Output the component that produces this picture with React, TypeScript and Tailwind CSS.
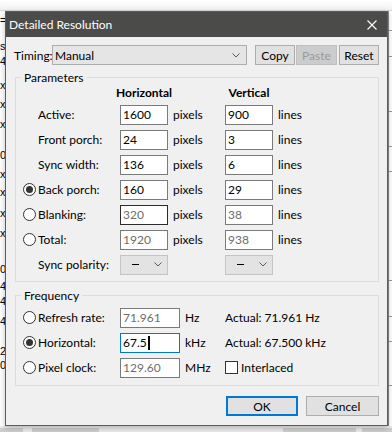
import React from "react";

const leftBits = [
  { t: "=", y: 21 },
  { t: "sl", y: 47 },
  { t: "40", y: 62 },
  { t: "x", y: 86 },
  { t: "x", y: 105 },
  { t: "x", y: 125 },
  { t: "00", y: 156 },
  { t: "x", y: 175 },
  { t: "x", y: 193 },
  { t: "x", y: 214 },
  { t: "x", y: 234 },
  { t: "02", y: 270 },
  { t: "4", y: 287 },
  { t: "4", y: 302 },
  { t: "4", y: 322 },
  { t: "28", y: 352 },
  { t: "0", y: 366 },
];

const rightLines = [32, 58, 113, 148, 173, 282, 318, 343, 387];

const Radio = ({ checked }: { checked?: boolean }) => (
  <span className="w-[13px] h-[13px] rounded-full border border-[#333] bg-white flex items-center justify-center shrink-0">
    {checked && <span className="w-[7px] h-[7px] rounded-full bg-[#333]" />}
  </span>
);

const Chevron = () => (
  <svg width="8" height="5" viewBox="0 0 8 5" className="shrink-0">
    <path d="M0.5 0.5 L4 4 L7.5 0.5" fill="none" stroke="#5a5a5a" strokeWidth="1" />
  </svg>
);

const Field = ({
  value,
  dim,
  w = "w-[48px]",
  border = "border-[#7a7a7a]",
  caret,
}: {
  value: string;
  dim?: boolean;
  w?: string;
  border?: string;
  caret?: boolean;
}) => (
  <div
    className={`${w} h-[20px] border ${border} bg-white pl-[2px] flex items-center shrink-0 ${
      dim ? "text-[#6d6d6d]" : "text-black"
    }`}
  >
    {value}
    {caret && <span className="ml-[1px] w-[2px] h-[14px] bg-black" />}
  </div>
);

const Polarity = () => (
  <div className="w-[48px] h-[20px] border border-[#c4c4c4] bg-[#e3e3e3] flex items-center justify-end pr-[5px] gap-[15px] shrink-0">
    <span className="w-[7px] h-[1px] bg-black" />
    <Chevron />
  </div>
);

type Row = {
  label: string;
  radio?: boolean;
  checked?: boolean;
  h: string;
  v: string;
  dim?: boolean;
  hBorder?: string;
};

const paramRows: Row[] = [
  { label: "Active:", h: "1600", v: "900" },
  { label: "Front porch:", h: "24", v: "3" },
  { label: "Sync width:", h: "136", v: "6" },
  { label: "Back porch:", radio: true, checked: true, h: "160", v: "29" },
  { label: "Blanking:", radio: true, h: "320", v: "38", dim: true, hBorder: "border-[#2b2b2b]" },
  { label: "Total:", radio: true, h: "1920", v: "938", dim: true },
];

const Label = ({ radio, checked, text }: { radio?: boolean; checked?: boolean; text: string }) => (
  <div className="w-[104px] pl-[7px] flex items-center gap-[2px] shrink-0">
    {radio ? <Radio checked={checked} /> : <span className="w-[13px] shrink-0" />}
    <span className="whitespace-nowrap">{text}</span>
  </div>
);

const Btn = ({
  children,
  w,
  disabled,
  primary,
}: {
  children: React.ReactNode;
  w: string;
  disabled?: boolean;
  primary?: boolean;
}) => (
  <div
    className={`${w} h-[20px] flex items-center justify-center shrink-0 ${
      primary
        ? "border-2 border-[#0078d7] bg-[#e1e1e1] text-black"
        : disabled
        ? "border border-[#bfbfbf] bg-[#cccccc] text-[#9a9a9a]"
        : "border border-[#adadad] bg-[#e1e1e1] text-black"
    }`}
  >
    {children}
  </div>
);

export default function App() {
  return (
    <div className="relative w-[392px] h-[432px] overflow-hidden bg-white font-['Lato','Noto_Sans',sans-serif] text-[12px] leading-[15px] text-black">
      {/* backdrop window, mostly hidden */}
      <div className="flex flex-col h-full">
        <div className="h-[11px] bg-gradient-to-b from-white to-[#f2f2f2] border-b border-[#d9d9d9]" />
        <div className="flex flex-1">
          <div className="w-[5px] flex flex-col font-['Liberation_Sans',sans-serif] text-[11px] leading-[12px] overflow-hidden">
            {leftBits.map((b, i) => (
              <div
                key={i}
                className="whitespace-nowrap"
                style={{ marginTop: b.y - 6 - (i === 0 ? 12 : leftBits[i - 1].y + 6) }}
              >
                {b.t}
              </div>
            ))}
          </div>
          <div className="flex-1" />
          <div className="w-[4px] flex flex-col border-l border-[#8a8a8a]">
            {rightLines.map((y, i) => (
              <div
                key={i}
                className="h-[1px] bg-[#9a9a9a] shrink-0"
                style={{ marginTop: y - 1 - (i === 0 ? 12 : rightLines[i - 1]) }}
              />
            ))}
          </div>
        </div>
        <div className="h-[6px] bg-[#ececec] flex items-end gap-0">
          <div className="w-[23px] h-[4px] bg-[#cfcfcf]" />
          <div className="w-[9px]" />
          <div className="w-[67px] h-[4px] bg-[#cfcfcf]" />
          <div className="w-[184px]" />
          <div className="w-[73px] h-[4px] bg-[#cfcfcf]" />
          <div className="w-[6px]" />
          <div className="flex-1 h-[4px] bg-[#cfcfcf]" />
        </div>
      </div>

      {/* dialog */}
      <div className="absolute left-[5px] top-[11px] w-[383px] h-[415px] border border-[#5c5c5a] bg-[#f0f0f0] flex flex-col shadow-[0_2px_6px_rgba(0,0,0,0.25)]">
        <div className="h-[25px] bg-[#4b4b49] flex items-center justify-between pl-[3px] pr-[10px] text-white shrink-0">
          <span>Detailed Resolution</span>
          <svg width="10" height="10" viewBox="0 0 10 10">
            <path d="M0.5 0.5 L9.5 9.5 M9.5 0.5 L0.5 9.5" stroke="#ffffff" strokeWidth="1.1" fill="none" />
          </svg>
        </div>

        {/* timing row */}
        <div className="mt-[8px] pl-[8px] flex items-center h-[20px]">
          <span className="w-[38px] shrink-0">Timing:</span>
          <div className="w-[195px] h-[20px] border border-[#adadad] bg-[#e5e5e5] flex items-center justify-between pl-[2px] pr-[6px]">
            <span>Manual</span>
            <Chevron />
          </div>
          <div className="ml-[8px]">
            <Btn w="w-[40px]">Copy</Btn>
          </div>
          <div className="ml-[1px]">
            <Btn w="w-[41px]" disabled>
              Paste
            </Btn>
          </div>
          <div className="ml-[2px]">
            <Btn w="w-[40px]">Reset</Btn>
          </div>
        </div>

        {/* Parameters */}
        <fieldset className="mt-[5px] ml-[9px] w-[364px] border border-[#dcdcdc] px-0 pt-0 pb-[4px]">
          <legend className="ml-[5px] px-[3px] leading-[15px]">Parameters</legend>
          <div className="flex h-[14px] items-center font-bold">
            <span className="w-[104px] shrink-0" />
            <span className="w-[48px] flex justify-center whitespace-nowrap shrink-0">Horizontal</span>
            <span className="w-[57px] shrink-0" />
            <span className="w-[48px] flex justify-center whitespace-nowrap shrink-0">Vertical</span>
          </div>
          <div className="mt-[3px] flex flex-col">
            {paramRows.map((r) => (
              <div key={r.label} className="flex items-center h-[25px]">
                <Label radio={r.radio} checked={r.checked} text={r.label} />
                <Field value={r.h} dim={r.dim} border={r.hBorder} />
                <span className="w-[57px] pl-[5px] shrink-0">pixels</span>
                <Field value={r.v} dim={r.dim} />
                <span className="pl-[5px]">lines</span>
              </div>
            ))}
            <div className="flex items-center h-[25px]">
              <Label text="Sync polarity:" />
              <Polarity />
              <span className="w-[57px] shrink-0" />
              <Polarity />
            </div>
          </div>
        </fieldset>

        {/* Frequency */}
        <fieldset className="mt-[6px] ml-[9px] w-[364px] border border-[#dcdcdc] px-0 pt-0 pb-[5px]">
          <legend className="ml-[5px] px-[3px] leading-[15px]">Frequency</legend>
          <div className="mt-[2px] flex flex-col">
            <div className="flex items-center h-[25px]">
              <Label radio text="Refresh rate:" />
              <Field value="71.961" dim w="w-[60px]" />
              <span className="w-[45px] pl-[5px] shrink-0">Hz</span>
              <span className="whitespace-nowrap">Actual: 71.961 Hz</span>
            </div>
            <div className="flex items-center h-[25px]">
              <Label radio checked text="Horizontal:" />
              <Field value="67.5" w="w-[60px]" border="border-[#0078d7]" caret />
              <span className="w-[45px] pl-[5px] shrink-0">kHz</span>
              <span className="whitespace-nowrap">Actual: 67.500 kHz</span>
            </div>
            <div className="flex items-center h-[25px]">
              <Label radio text="Pixel clock:" />
              <Field value="129.60" dim w="w-[60px]" />
              <span className="w-[45px] pl-[5px] shrink-0">MHz</span>
              <span className="w-[13px] h-[13px] border border-[#333] bg-white shrink-0" />
              <span className="pl-[3px] whitespace-nowrap">Interlaced</span>
            </div>
          </div>
        </fieldset>

        {/* buttons */}
        <div className="mt-[10px] pr-[8px] flex justify-end gap-[8px]">
          <Btn w="w-[72px]" primary>
            OK
          </Btn>
          <Btn w="w-[73px]">Cancel</Btn>
        </div>
      </div>
    </div>
  );
}
